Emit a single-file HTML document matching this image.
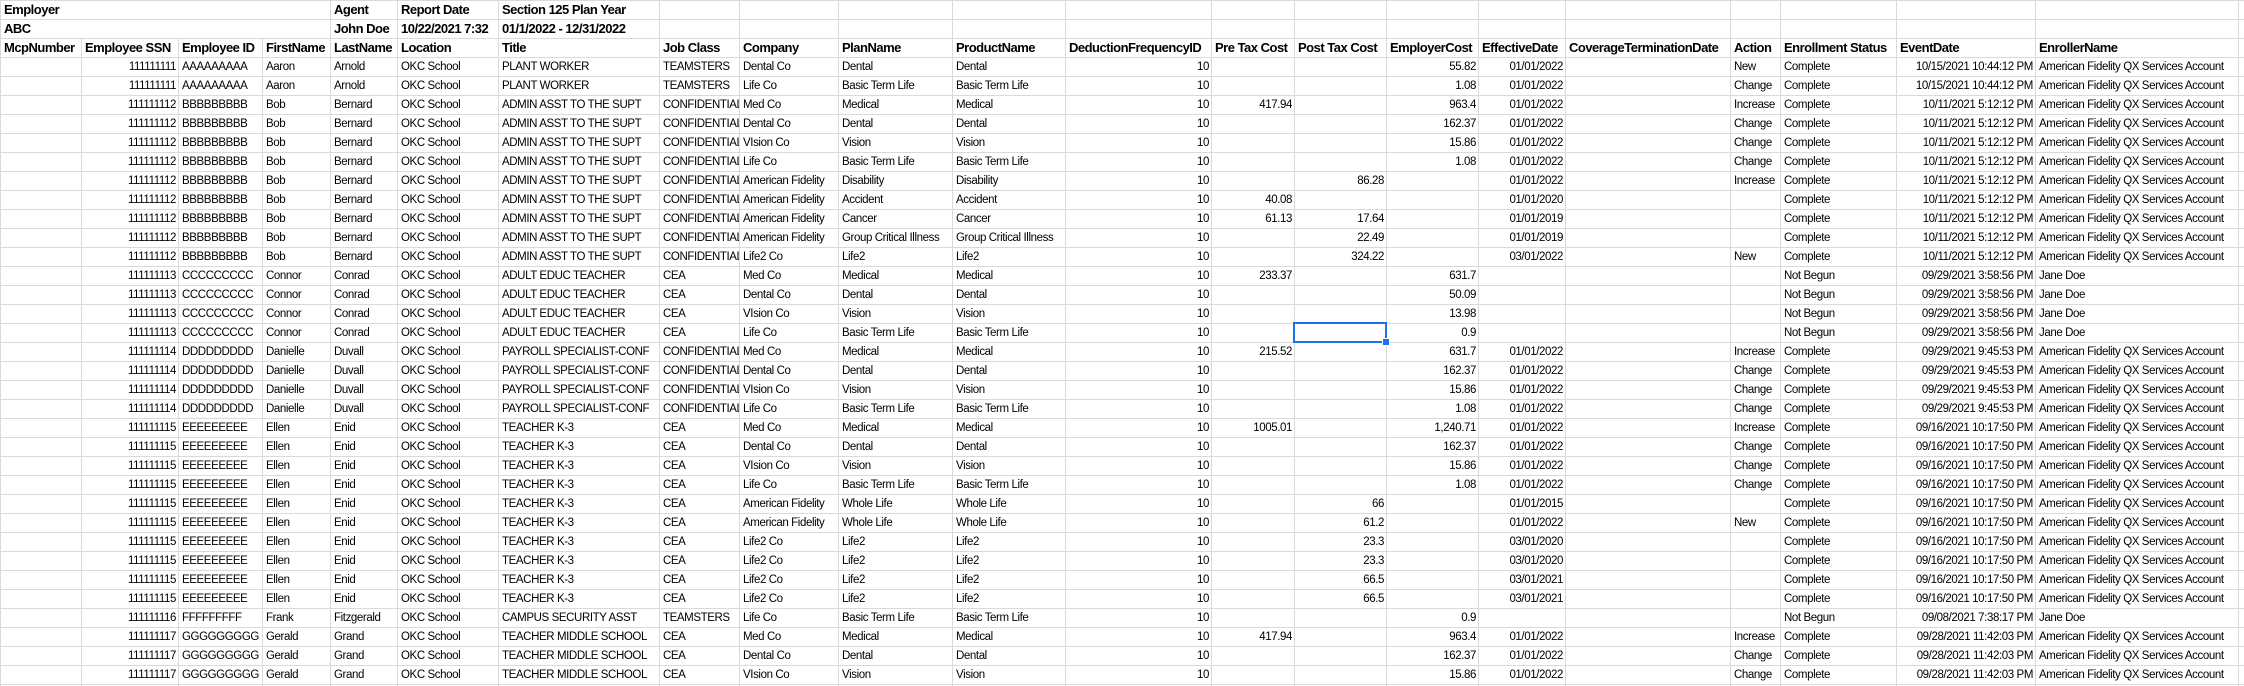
<!DOCTYPE html>
<html><head><meta charset="utf-8">
<style>
html,body{margin:0;padding:0;background:#fff;width:2244px;height:686px;overflow:hidden}
table{border-collapse:collapse;table-layout:fixed;width:2244px;font-family:"Liberation Sans",sans-serif;font-size:11.5px;letter-spacing:-0.4px;color:#000}
td{border:1px solid #dadada;height:18px;line-height:18px;padding:0 2px 0 3px;white-space:nowrap;overflow:hidden;box-sizing:content-box}
tr.b td{font-weight:bold;font-size:13px;letter-spacing:-0.5px}
tbody tr.d td:nth-child(2),tbody tr.d td:nth-child(12),tbody tr.d td:nth-child(13),tbody tr.d td:nth-child(14),tbody tr.d td:nth-child(15),tbody tr.d td:nth-child(16),tbody tr.d td:nth-child(20){text-align:right}
.sel{position:absolute;left:1293px;top:322px;width:90px;height:17px;border:2px solid #1a73e8}
.sel:after{content:"";position:absolute;right:-5px;bottom:-5px;width:6px;height:6px;background:#1a73e8;border:1px solid #fff}
</style></head><body>
<table>
<colgroup>
<col style="width:81px"><col style="width:97px"><col style="width:84px"><col style="width:68px"><col style="width:67px"><col style="width:101px"><col style="width:161px"><col style="width:80px"><col style="width:99px"><col style="width:114px"><col style="width:113px"><col style="width:146px"><col style="width:83px"><col style="width:92px"><col style="width:92px"><col style="width:87px"><col style="width:165px"><col style="width:50px"><col style="width:116px"><col style="width:139px"><col style="width:203px"><col style="width:6px">
</colgroup>
<tbody>
<tr class="b"><td colspan="4">Employer</td><td>Agent</td><td>Report Date</td><td>Section 125 Plan Year</td><td></td><td></td><td></td><td></td><td></td><td></td><td></td><td></td><td></td><td></td><td></td><td></td><td></td><td></td><td></td></tr>
<tr class="b"><td colspan="4">ABC</td><td>John Doe</td><td>10/22/2021 7:32</td><td>01/1/2022 - 12/31/2022</td><td></td><td></td><td></td><td></td><td></td><td></td><td></td><td></td><td></td><td></td><td></td><td></td><td></td><td></td><td></td></tr>
<tr class="b"><td>McpNumber</td><td>Employee SSN</td><td>Employee ID</td><td>FirstName</td><td>LastName</td><td>Location</td><td>Title</td><td>Job Class</td><td>Company</td><td>PlanName</td><td>ProductName</td><td>DeductionFrequencyID</td><td>Pre Tax Cost</td><td>Post Tax Cost</td><td>EmployerCost</td><td>EffectiveDate</td><td>CoverageTerminationDate</td><td>Action</td><td>Enrollment Status</td><td>EventDate</td><td>EnrollerName</td><td></td></tr>
<tr class="d"><td></td><td>111111111</td><td>AAAAAAAAA</td><td>Aaron</td><td>Arnold</td><td>OKC School</td><td>PLANT WORKER</td><td>TEAMSTERS</td><td>Dental Co</td><td>Dental</td><td>Dental</td><td>10</td><td></td><td></td><td>55.82</td><td>01/01/2022</td><td></td><td>New</td><td>Complete</td><td>10/15/2021 10:44:12 PM</td><td>American Fidelity QX Services Account</td><td></td></tr>
<tr class="d"><td></td><td>111111111</td><td>AAAAAAAAA</td><td>Aaron</td><td>Arnold</td><td>OKC School</td><td>PLANT WORKER</td><td>TEAMSTERS</td><td>Life Co</td><td>Basic Term Life</td><td>Basic Term Life</td><td>10</td><td></td><td></td><td>1.08</td><td>01/01/2022</td><td></td><td>Change</td><td>Complete</td><td>10/15/2021 10:44:12 PM</td><td>American Fidelity QX Services Account</td><td></td></tr>
<tr class="d"><td></td><td>111111112</td><td>BBBBBBBBB</td><td>Bob</td><td>Bernard</td><td>OKC School</td><td>ADMIN ASST TO THE SUPT</td><td>CONFIDENTIAL</td><td>Med Co</td><td>Medical</td><td>Medical</td><td>10</td><td>417.94</td><td></td><td>963.4</td><td>01/01/2022</td><td></td><td>Increase</td><td>Complete</td><td>10/11/2021 5:12:12 PM</td><td>American Fidelity QX Services Account</td><td></td></tr>
<tr class="d"><td></td><td>111111112</td><td>BBBBBBBBB</td><td>Bob</td><td>Bernard</td><td>OKC School</td><td>ADMIN ASST TO THE SUPT</td><td>CONFIDENTIAL</td><td>Dental Co</td><td>Dental</td><td>Dental</td><td>10</td><td></td><td></td><td>162.37</td><td>01/01/2022</td><td></td><td>Change</td><td>Complete</td><td>10/11/2021 5:12:12 PM</td><td>American Fidelity QX Services Account</td><td></td></tr>
<tr class="d"><td></td><td>111111112</td><td>BBBBBBBBB</td><td>Bob</td><td>Bernard</td><td>OKC School</td><td>ADMIN ASST TO THE SUPT</td><td>CONFIDENTIAL</td><td>VIsion Co</td><td>Vision</td><td>Vision</td><td>10</td><td></td><td></td><td>15.86</td><td>01/01/2022</td><td></td><td>Change</td><td>Complete</td><td>10/11/2021 5:12:12 PM</td><td>American Fidelity QX Services Account</td><td></td></tr>
<tr class="d"><td></td><td>111111112</td><td>BBBBBBBBB</td><td>Bob</td><td>Bernard</td><td>OKC School</td><td>ADMIN ASST TO THE SUPT</td><td>CONFIDENTIAL</td><td>Life Co</td><td>Basic Term Life</td><td>Basic Term Life</td><td>10</td><td></td><td></td><td>1.08</td><td>01/01/2022</td><td></td><td>Change</td><td>Complete</td><td>10/11/2021 5:12:12 PM</td><td>American Fidelity QX Services Account</td><td></td></tr>
<tr class="d"><td></td><td>111111112</td><td>BBBBBBBBB</td><td>Bob</td><td>Bernard</td><td>OKC School</td><td>ADMIN ASST TO THE SUPT</td><td>CONFIDENTIAL</td><td>American Fidelity</td><td>Disability</td><td>Disability</td><td>10</td><td></td><td>86.28</td><td></td><td>01/01/2022</td><td></td><td>Increase</td><td>Complete</td><td>10/11/2021 5:12:12 PM</td><td>American Fidelity QX Services Account</td><td></td></tr>
<tr class="d"><td></td><td>111111112</td><td>BBBBBBBBB</td><td>Bob</td><td>Bernard</td><td>OKC School</td><td>ADMIN ASST TO THE SUPT</td><td>CONFIDENTIAL</td><td>American Fidelity</td><td>Accident</td><td>Accident</td><td>10</td><td>40.08</td><td></td><td></td><td>01/01/2020</td><td></td><td></td><td>Complete</td><td>10/11/2021 5:12:12 PM</td><td>American Fidelity QX Services Account</td><td></td></tr>
<tr class="d"><td></td><td>111111112</td><td>BBBBBBBBB</td><td>Bob</td><td>Bernard</td><td>OKC School</td><td>ADMIN ASST TO THE SUPT</td><td>CONFIDENTIAL</td><td>American Fidelity</td><td>Cancer</td><td>Cancer</td><td>10</td><td>61.13</td><td>17.64</td><td></td><td>01/01/2019</td><td></td><td></td><td>Complete</td><td>10/11/2021 5:12:12 PM</td><td>American Fidelity QX Services Account</td><td></td></tr>
<tr class="d"><td></td><td>111111112</td><td>BBBBBBBBB</td><td>Bob</td><td>Bernard</td><td>OKC School</td><td>ADMIN ASST TO THE SUPT</td><td>CONFIDENTIAL</td><td>American Fidelity</td><td>Group Critical Illness</td><td>Group Critical Illness</td><td>10</td><td></td><td>22.49</td><td></td><td>01/01/2019</td><td></td><td></td><td>Complete</td><td>10/11/2021 5:12:12 PM</td><td>American Fidelity QX Services Account</td><td></td></tr>
<tr class="d"><td></td><td>111111112</td><td>BBBBBBBBB</td><td>Bob</td><td>Bernard</td><td>OKC School</td><td>ADMIN ASST TO THE SUPT</td><td>CONFIDENTIAL</td><td>Life2 Co</td><td>Life2</td><td>Life2</td><td>10</td><td></td><td>324.22</td><td></td><td>03/01/2022</td><td></td><td>New</td><td>Complete</td><td>10/11/2021 5:12:12 PM</td><td>American Fidelity QX Services Account</td><td></td></tr>
<tr class="d"><td></td><td>111111113</td><td>CCCCCCCCC</td><td>Connor</td><td>Conrad</td><td>OKC School</td><td>ADULT EDUC TEACHER</td><td>CEA</td><td>Med Co</td><td>Medical</td><td>Medical</td><td>10</td><td>233.37</td><td></td><td>631.7</td><td></td><td></td><td></td><td>Not Begun</td><td>09/29/2021 3:58:56 PM</td><td>Jane Doe</td><td></td></tr>
<tr class="d"><td></td><td>111111113</td><td>CCCCCCCCC</td><td>Connor</td><td>Conrad</td><td>OKC School</td><td>ADULT EDUC TEACHER</td><td>CEA</td><td>Dental Co</td><td>Dental</td><td>Dental</td><td>10</td><td></td><td></td><td>50.09</td><td></td><td></td><td></td><td>Not Begun</td><td>09/29/2021 3:58:56 PM</td><td>Jane Doe</td><td></td></tr>
<tr class="d"><td></td><td>111111113</td><td>CCCCCCCCC</td><td>Connor</td><td>Conrad</td><td>OKC School</td><td>ADULT EDUC TEACHER</td><td>CEA</td><td>VIsion Co</td><td>Vision</td><td>Vision</td><td>10</td><td></td><td></td><td>13.98</td><td></td><td></td><td></td><td>Not Begun</td><td>09/29/2021 3:58:56 PM</td><td>Jane Doe</td><td></td></tr>
<tr class="d"><td></td><td>111111113</td><td>CCCCCCCCC</td><td>Connor</td><td>Conrad</td><td>OKC School</td><td>ADULT EDUC TEACHER</td><td>CEA</td><td>Life Co</td><td>Basic Term Life</td><td>Basic Term Life</td><td>10</td><td></td><td></td><td>0.9</td><td></td><td></td><td></td><td>Not Begun</td><td>09/29/2021 3:58:56 PM</td><td>Jane Doe</td><td></td></tr>
<tr class="d"><td></td><td>111111114</td><td>DDDDDDDDD</td><td>Danielle</td><td>Duvall</td><td>OKC School</td><td>PAYROLL SPECIALIST-CONF</td><td>CONFIDENTIAL</td><td>Med Co</td><td>Medical</td><td>Medical</td><td>10</td><td>215.52</td><td></td><td>631.7</td><td>01/01/2022</td><td></td><td>Increase</td><td>Complete</td><td>09/29/2021 9:45:53 PM</td><td>American Fidelity QX Services Account</td><td></td></tr>
<tr class="d"><td></td><td>111111114</td><td>DDDDDDDDD</td><td>Danielle</td><td>Duvall</td><td>OKC School</td><td>PAYROLL SPECIALIST-CONF</td><td>CONFIDENTIAL</td><td>Dental Co</td><td>Dental</td><td>Dental</td><td>10</td><td></td><td></td><td>162.37</td><td>01/01/2022</td><td></td><td>Change</td><td>Complete</td><td>09/29/2021 9:45:53 PM</td><td>American Fidelity QX Services Account</td><td></td></tr>
<tr class="d"><td></td><td>111111114</td><td>DDDDDDDDD</td><td>Danielle</td><td>Duvall</td><td>OKC School</td><td>PAYROLL SPECIALIST-CONF</td><td>CONFIDENTIAL</td><td>VIsion Co</td><td>Vision</td><td>Vision</td><td>10</td><td></td><td></td><td>15.86</td><td>01/01/2022</td><td></td><td>Change</td><td>Complete</td><td>09/29/2021 9:45:53 PM</td><td>American Fidelity QX Services Account</td><td></td></tr>
<tr class="d"><td></td><td>111111114</td><td>DDDDDDDDD</td><td>Danielle</td><td>Duvall</td><td>OKC School</td><td>PAYROLL SPECIALIST-CONF</td><td>CONFIDENTIAL</td><td>Life Co</td><td>Basic Term Life</td><td>Basic Term Life</td><td>10</td><td></td><td></td><td>1.08</td><td>01/01/2022</td><td></td><td>Change</td><td>Complete</td><td>09/29/2021 9:45:53 PM</td><td>American Fidelity QX Services Account</td><td></td></tr>
<tr class="d"><td></td><td>111111115</td><td>EEEEEEEEE</td><td>Ellen</td><td>Enid</td><td>OKC School</td><td>TEACHER K-3</td><td>CEA</td><td>Med Co</td><td>Medical</td><td>Medical</td><td>10</td><td>1005.01</td><td></td><td>1,240.71</td><td>01/01/2022</td><td></td><td>Increase</td><td>Complete</td><td>09/16/2021 10:17:50 PM</td><td>American Fidelity QX Services Account</td><td></td></tr>
<tr class="d"><td></td><td>111111115</td><td>EEEEEEEEE</td><td>Ellen</td><td>Enid</td><td>OKC School</td><td>TEACHER K-3</td><td>CEA</td><td>Dental Co</td><td>Dental</td><td>Dental</td><td>10</td><td></td><td></td><td>162.37</td><td>01/01/2022</td><td></td><td>Change</td><td>Complete</td><td>09/16/2021 10:17:50 PM</td><td>American Fidelity QX Services Account</td><td></td></tr>
<tr class="d"><td></td><td>111111115</td><td>EEEEEEEEE</td><td>Ellen</td><td>Enid</td><td>OKC School</td><td>TEACHER K-3</td><td>CEA</td><td>VIsion Co</td><td>Vision</td><td>Vision</td><td>10</td><td></td><td></td><td>15.86</td><td>01/01/2022</td><td></td><td>Change</td><td>Complete</td><td>09/16/2021 10:17:50 PM</td><td>American Fidelity QX Services Account</td><td></td></tr>
<tr class="d"><td></td><td>111111115</td><td>EEEEEEEEE</td><td>Ellen</td><td>Enid</td><td>OKC School</td><td>TEACHER K-3</td><td>CEA</td><td>Life Co</td><td>Basic Term Life</td><td>Basic Term Life</td><td>10</td><td></td><td></td><td>1.08</td><td>01/01/2022</td><td></td><td>Change</td><td>Complete</td><td>09/16/2021 10:17:50 PM</td><td>American Fidelity QX Services Account</td><td></td></tr>
<tr class="d"><td></td><td>111111115</td><td>EEEEEEEEE</td><td>Ellen</td><td>Enid</td><td>OKC School</td><td>TEACHER K-3</td><td>CEA</td><td>American Fidelity</td><td>Whole Life</td><td>Whole Life</td><td>10</td><td></td><td>66</td><td></td><td>01/01/2015</td><td></td><td></td><td>Complete</td><td>09/16/2021 10:17:50 PM</td><td>American Fidelity QX Services Account</td><td></td></tr>
<tr class="d"><td></td><td>111111115</td><td>EEEEEEEEE</td><td>Ellen</td><td>Enid</td><td>OKC School</td><td>TEACHER K-3</td><td>CEA</td><td>American Fidelity</td><td>Whole Life</td><td>Whole Life</td><td>10</td><td></td><td>61.2</td><td></td><td>01/01/2022</td><td></td><td>New</td><td>Complete</td><td>09/16/2021 10:17:50 PM</td><td>American Fidelity QX Services Account</td><td></td></tr>
<tr class="d"><td></td><td>111111115</td><td>EEEEEEEEE</td><td>Ellen</td><td>Enid</td><td>OKC School</td><td>TEACHER K-3</td><td>CEA</td><td>Life2 Co</td><td>Life2</td><td>Life2</td><td>10</td><td></td><td>23.3</td><td></td><td>03/01/2020</td><td></td><td></td><td>Complete</td><td>09/16/2021 10:17:50 PM</td><td>American Fidelity QX Services Account</td><td></td></tr>
<tr class="d"><td></td><td>111111115</td><td>EEEEEEEEE</td><td>Ellen</td><td>Enid</td><td>OKC School</td><td>TEACHER K-3</td><td>CEA</td><td>Life2 Co</td><td>Life2</td><td>Life2</td><td>10</td><td></td><td>23.3</td><td></td><td>03/01/2020</td><td></td><td></td><td>Complete</td><td>09/16/2021 10:17:50 PM</td><td>American Fidelity QX Services Account</td><td></td></tr>
<tr class="d"><td></td><td>111111115</td><td>EEEEEEEEE</td><td>Ellen</td><td>Enid</td><td>OKC School</td><td>TEACHER K-3</td><td>CEA</td><td>Life2 Co</td><td>Life2</td><td>Life2</td><td>10</td><td></td><td>66.5</td><td></td><td>03/01/2021</td><td></td><td></td><td>Complete</td><td>09/16/2021 10:17:50 PM</td><td>American Fidelity QX Services Account</td><td></td></tr>
<tr class="d"><td></td><td>111111115</td><td>EEEEEEEEE</td><td>Ellen</td><td>Enid</td><td>OKC School</td><td>TEACHER K-3</td><td>CEA</td><td>Life2 Co</td><td>Life2</td><td>Life2</td><td>10</td><td></td><td>66.5</td><td></td><td>03/01/2021</td><td></td><td></td><td>Complete</td><td>09/16/2021 10:17:50 PM</td><td>American Fidelity QX Services Account</td><td></td></tr>
<tr class="d"><td></td><td>111111116</td><td>FFFFFFFFF</td><td>Frank</td><td>Fitzgerald</td><td>OKC School</td><td>CAMPUS SECURITY ASST</td><td>TEAMSTERS</td><td>Life Co</td><td>Basic Term Life</td><td>Basic Term Life</td><td>10</td><td></td><td></td><td>0.9</td><td></td><td></td><td></td><td>Not Begun</td><td>09/08/2021 7:38:17 PM</td><td>Jane Doe</td><td></td></tr>
<tr class="d"><td></td><td>111111117</td><td>GGGGGGGGG</td><td>Gerald</td><td>Grand</td><td>OKC School</td><td>TEACHER MIDDLE SCHOOL</td><td>CEA</td><td>Med Co</td><td>Medical</td><td>Medical</td><td>10</td><td>417.94</td><td></td><td>963.4</td><td>01/01/2022</td><td></td><td>Increase</td><td>Complete</td><td>09/28/2021 11:42:03 PM</td><td>American Fidelity QX Services Account</td><td></td></tr>
<tr class="d"><td></td><td>111111117</td><td>GGGGGGGGG</td><td>Gerald</td><td>Grand</td><td>OKC School</td><td>TEACHER MIDDLE SCHOOL</td><td>CEA</td><td>Dental Co</td><td>Dental</td><td>Dental</td><td>10</td><td></td><td></td><td>162.37</td><td>01/01/2022</td><td></td><td>Change</td><td>Complete</td><td>09/28/2021 11:42:03 PM</td><td>American Fidelity QX Services Account</td><td></td></tr>
<tr class="d"><td></td><td>111111117</td><td>GGGGGGGGG</td><td>Gerald</td><td>Grand</td><td>OKC School</td><td>TEACHER MIDDLE SCHOOL</td><td>CEA</td><td>VIsion Co</td><td>Vision</td><td>Vision</td><td>10</td><td></td><td></td><td>15.86</td><td>01/01/2022</td><td></td><td>Change</td><td>Complete</td><td>09/28/2021 11:42:03 PM</td><td>American Fidelity QX Services Account</td><td></td></tr>
<tr class="d"><td></td><td></td><td></td><td></td><td></td><td></td><td></td><td></td><td></td><td></td><td></td><td></td><td></td><td></td><td></td><td></td><td></td><td></td><td></td><td></td><td></td><td></td></tr>
</tbody></table>
<div class="sel"></div>
</body></html>
